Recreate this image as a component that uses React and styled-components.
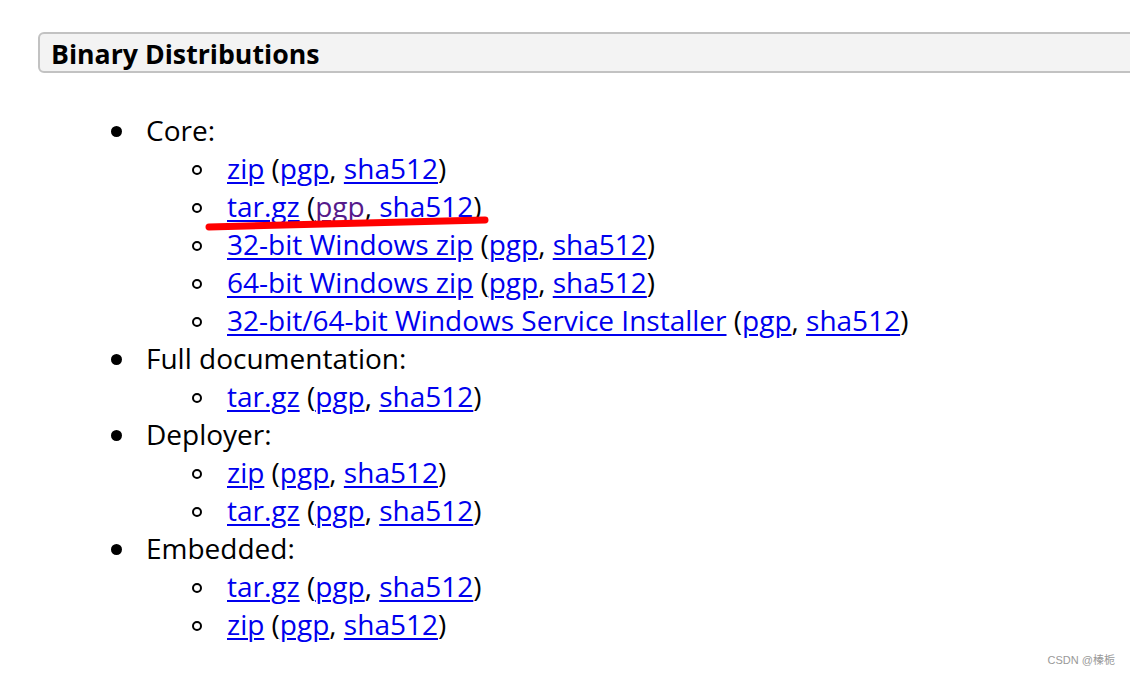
import React from "react";
import styled, { createGlobalStyle } from "styled-components";

const Global = createGlobalStyle`
  html, body {
    margin: 0;
    padding: 0;
    background: #fff;
    overflow: hidden;
  }
  body {
    font-family: "Open Sans", "Noto Sans", sans-serif;
    color: #000;
  }
`;

const Page = styled.div`
  position: relative;
  width: 1130px;
  height: 676px;
  padding-top: 32px;
  box-sizing: border-box;
`;

const Header = styled.h3`
  margin: 0 -20px 0 38px;
  height: 41px;
  box-sizing: border-box;
  border: 2px solid #c2c2c2;
  border-radius: 6px;
  background: #f3f3f3;
  padding: 0 0 0 11px;
  font-size: 26.7px;
  font-weight: 700;
  line-height: 39px;
`;

const List = styled.ul`
  list-style: none;
  margin: ${(p) => (p.$nested ? "0" : "38px 0 0")};
  padding: 0 0 0 ${(p) => (p.$nested ? "81px" : "146px")};
  font-size: 28px;
  line-height: 38px;
`;

const Item = styled.li`
  &::before {
    content: "";
    display: inline-block;
    box-sizing: border-box;
    vertical-align: middle;
    margin: -4px 0 0 -35px;
    width: ${(p) => (p.$nested ? "10px" : "11px")};
    height: ${(p) => (p.$nested ? "10px" : "11px")};
    margin-right: ${(p) => (p.$nested ? "25px" : "24px")};
    border-radius: 50%;
    background: ${(p) => (p.$nested ? "transparent" : "#000")};
    border: ${(p) => (p.$nested ? "2px solid #000" : "none")};
  }
`;

const Link = styled.a`
  color: ${(p) => (p.$visited ? "#551a8b" : "#0000ee")};
  text-decoration: underline;
  text-decoration-thickness: 2px;
  text-underline-offset: 3px;
`;

const Mark = styled.svg`
  position: absolute;
  left: 0;
  top: 0;
  pointer-events: none;
`;

const Watermark = styled.div`
  position: absolute;
  right: 15px;
  bottom: 9px;
  font-family: "Liberation Sans", "Noto Sans CJK SC", sans-serif;
  font-size: 11px;
  color: #999;
`;

const groups = [
  {
    name: "Core:",
    files: [
      { name: "zip" },
      { name: "tar.gz", visited: true },
      { name: "32-bit Windows zip" },
      { name: "64-bit Windows zip" },
      { name: "32-bit/64-bit Windows Service Installer" },
    ],
  },
  { name: "Full documentation:", files: [{ name: "tar.gz" }] },
  { name: "Deployer:", files: [{ name: "zip" }, { name: "tar.gz" }] },
  { name: "Embedded:", files: [{ name: "tar.gz" }, { name: "zip" }] },
];

const File = ({ file }) => (
  <Item $nested>
    <Link href="#">{file.name}</Link> (
    <Link href="#" $visited={file.visited}>pgp</Link>,{" "}
    <Link href="#">sha512</Link>)
  </Item>
);

export default function App() {
  return (
    <Page>
      <Global />
      <Header>Binary Distributions</Header>
      <List>
        {groups.map((g) => (
          <Item key={g.name}>
            {g.name}
            <List $nested>
              {g.files.map((f, i) => (
                <File key={i} file={f} />
              ))}
            </List>
          </Item>
        ))}
      </List>
      <Mark width="1130" height="676">
        <path
          d="M209 227 Q 340 224 485 220"
          stroke="#ff0000"
          strokeWidth="7"
          fill="none"
          strokeLinecap="round"
        />
      </Mark>
      <Watermark>CSDN @榛栀</Watermark>
    </Page>
  );
}
